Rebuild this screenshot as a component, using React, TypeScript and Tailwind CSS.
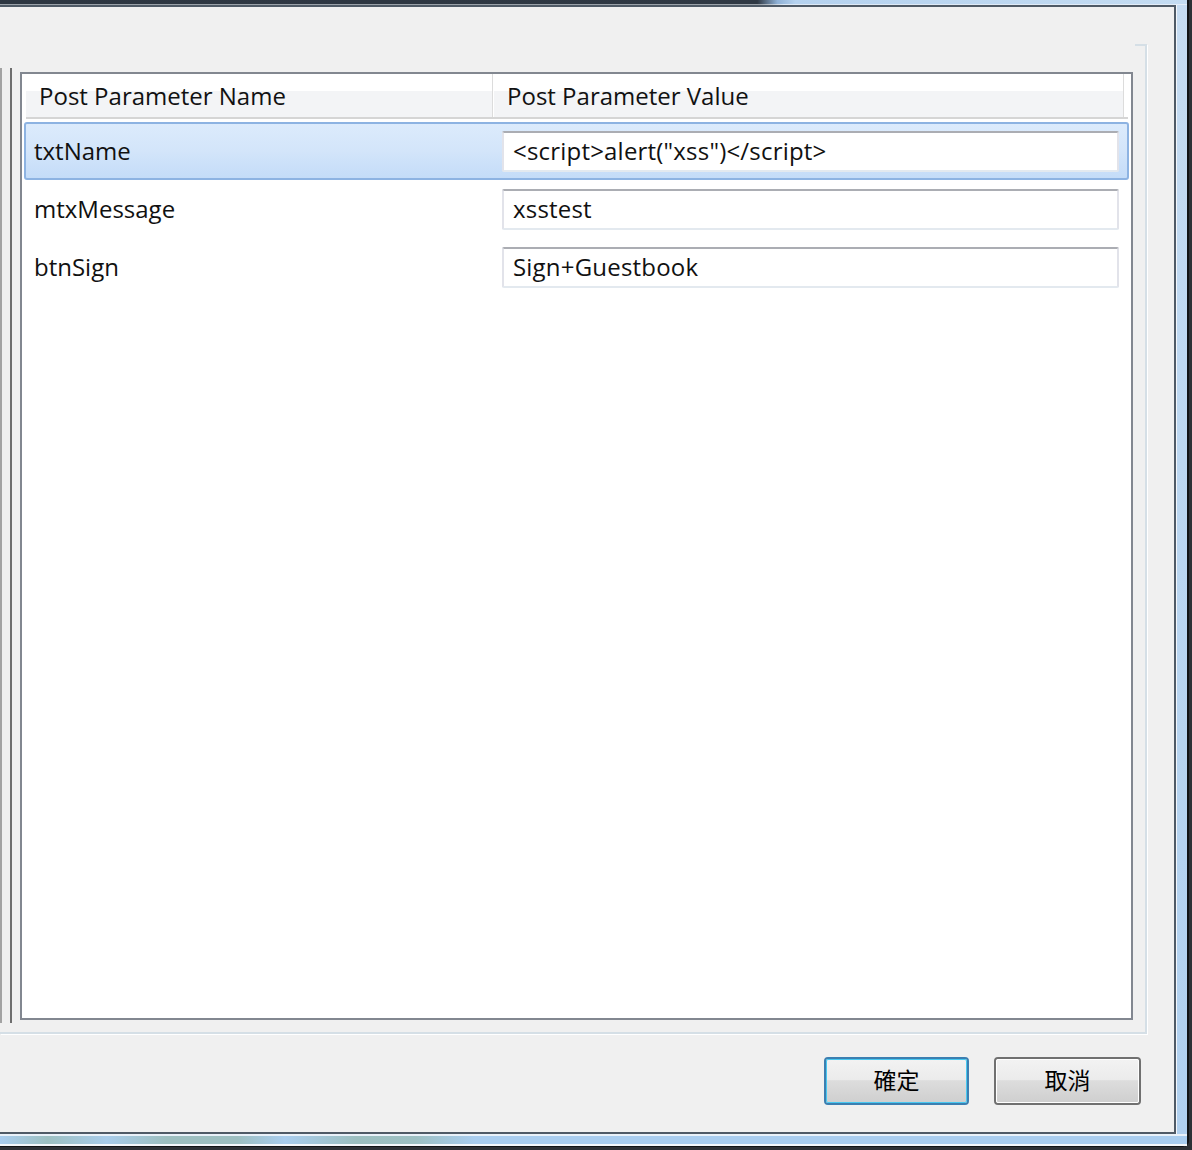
import React from 'react';

type Param = { name: string; value: string; selected?: boolean };

const params: Param[] = [
  { name: 'txtName', value: '<script>alert("xss")</script>', selected: true },
  { name: 'mtxMessage', value: 'xsstest' },
  { name: 'btnSign', value: 'Sign+Guestbook' },
];

const uiFont = "font-['Open_Sans','Noto_Sans_CJK_TC',sans-serif]";

const ParamRow: React.FC<{ p: Param }> = ({ p }) => (
  <div
    className={
      p.selected
        ? 'flex items-center h-[58px] mx-[2px] border-2 border-[#8db3e2] rounded-[3px] bg-[linear-gradient(180deg,#dcebfc_0%,#d3e5fa_50%,#c4dcf8_100%)]'
        : 'flex items-center h-[58px] mx-[2px] border-2 border-transparent'
    }
  >
    <div className="w-[476px] pl-[8px] text-[24px] text-[#111]">{p.name}</div>
    <div className="w-[617px] h-[41px] flex items-center pl-[9px] bg-white border-2 border-t-[#abadb3] border-x-[#e2e3ea] border-b-[#e3e9ef] rounded-[2px] text-[24px] text-[#111] whitespace-nowrap tracking-[0.2px]">
      {p.value}
    </div>
  </div>
);

const DialogButton: React.FC<{ label: string; primary?: boolean; width: string }> = ({ label, primary, width }) => (
  <button
    className={
      (primary ? 'border-[#3c7fb1] ' : 'border-[#707070] ') +
      width +
      ' h-[48px] border-2 rounded-[4px] p-0'
    }
  >
    <div
      className={
        (primary ? 'border-[#48c8f0] ' : 'border-white ') +
        'h-full w-full border rounded-[2px] flex items-center justify-center pb-[4px] bg-[linear-gradient(180deg,#f2f2f2_0%,#ebebeb_48%,#dddddd_49%,#cfcfcf_100%)] text-[23px] text-black font-["Noto_Sans_CJK_TC",sans-serif]'
      }
    >
      {label}
    </div>
  </button>
);

export default function App() {
  return (
    <div className={'w-[1192px] h-[1150px] bg-[#2d3136] overflow-hidden ' + uiFont}>
      <div className="w-[1189px] h-[1147px] flex flex-col border-r-2 border-b border-[#111315] rounded-br-[6px] bg-[#b3d2ef]">
        {/* title bar edge */}
        <div className="h-[4px] bg-[linear-gradient(90deg,#2d3641_0%,#2f3843_63.8%,#8fb1d6_65.5%,#b5d2ef_67%,#c4dcf2_100%)]" />
        <div className="h-px bg-[linear-gradient(90deg,#9aa1a8_0%,#9aa1a8_64%,#dce8f5_66%,#e3edf8_100%)]" />

        <div className="flex flex-1 min-h-0">
          {/* client area */}
          <div className="flex-1 flex flex-col bg-[#f0f0f0] border-t-2 border-r-2 border-b-2 border-[#4f5a66]">
            {/* group box */}
            <div className="mt-[37px] w-[1147px] h-[990px] flex flex-col border-r-2 border-b-2 border-[#d5dfe6] shadow-[1px_1px_0_#ffffff]">
              <div className="h-[2px] flex justify-end">
                <div className="w-[10px] bg-[#d5dfe6]" />
              </div>
              <div className="flex items-start">
                <div className="mt-[22px] w-[2px] h-[955px] bg-[#a3a3a3]" />
                <div className="ml-[8px] mt-[22px] w-[2px] h-[955px] bg-[#6e6e6e]" />
                <div className="ml-[8px] mt-[26px] w-[1113px] h-[948px] border-2 border-[#828790] bg-white flex flex-col">
                  {/* header */}
                  <div className="ml-[4px] mr-[3px] h-[45px] flex border-b-2 border-[#d5d5d5] bg-[linear-gradient(180deg,#ffffff_0%,#ffffff_40%,#f3f4f6_40%,#f3f4f6_100%)] text-[24px] text-[#111]">
                    <div className="w-[466px] pl-[13px] flex items-center">Post Parameter Name</div>
                    <div className="w-px bg-[#dcdcdc]" />
                    <div className="w-px bg-white" />
                    <div className="flex-1 pl-[13px] flex items-center">Post Parameter Value</div>
                    <div className="w-px bg-[#dcdcdc]" />
                    <div className="w-px bg-white" />
                    <div className="w-[3px] bg-white" />
                  </div>
                  <div className="h-[3px]" />
                  {params.map((p) => (
                    <ParamRow key={p.name} p={p} />
                  ))}
                </div>
              </div>
            </div>

            {/* buttons */}
            <div className="mt-[23px] flex justify-end gap-[25px] pr-[33px]">
              <DialogButton label="確定" primary width="w-[145px]" />
              <DialogButton label="取消" width="w-[147px]" />
            </div>
          </div>
          {/* right frame */}
          <div className="w-[11px] border-l border-[#f2f6fb] bg-[linear-gradient(180deg,#c6dcf2_0%,#bcd7f1_40%,#b0d0ef_100%)]" />
        </div>

        {/* bottom frame */}
        <div className="h-[2px] bg-[#e9f1f9]" />
        <div className="h-[8px] bg-[linear-gradient(90deg,#a9cdef_0%,#9dc0c2_4%,#a8ccea_9%,#9dbfc0_14%,#9dbfc1_20%,#a9cdee_24%,#9cbfc0_30%,#9dc0c3_35%,#a9cdef_40%,#a9cdef_100%)]" />
        <div className="h-[2px] bg-[#f4f7fb]" />
      </div>
    </div>
  );
}
